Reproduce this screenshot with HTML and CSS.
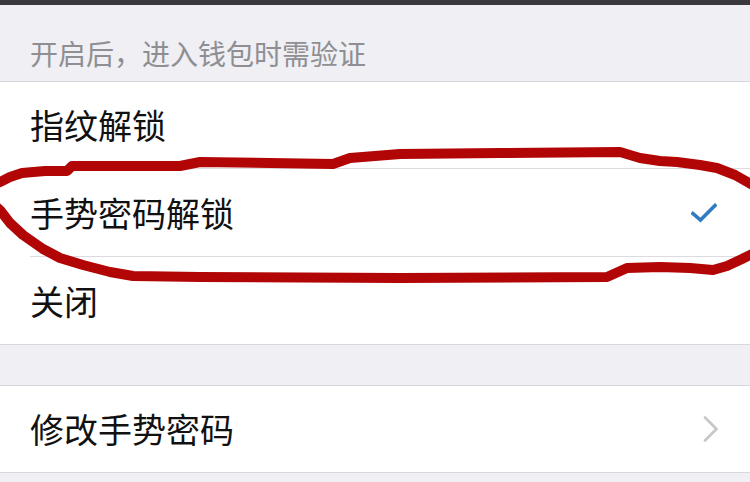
FILE: index.html
```html
<!DOCTYPE html>
<html lang="zh-CN">
<head>
    <meta charset="UTF-8">
    <meta name="viewport" content="width=device-width, initial-scale=1.0">
    <title>手势密码</title>
    <link rel="stylesheet" href="styles.css">
</head>
<body>
    <div class="topbar"></div>

    <div class="section-header">开启后，进入钱包时需验证</div>

    <div class="group">
        <div class="cell">
            <div class="cell-body">
                <span class="cell-title">指纹解锁</span>
            </div>
        </div>
        <div class="cell cell-tall">
            <div class="cell-body">
                <span class="cell-title">手势密码解锁</span>
                <svg class="check" width="26" height="20" viewBox="0 0 26 20">
                    <path d="M2 10.5 L9.5 17 L24 2.5" fill="none" stroke="#2f7cc3" stroke-width="3.6" stroke-linecap="square" stroke-linejoin="miter"/>
                </svg>
            </div>
        </div>
        <div class="cell">
            <div class="cell-body">
                <span class="cell-title">关闭</span>
            </div>
        </div>
    </div>

    <div class="group group-spaced">
        <div class="cell">
            <div class="cell-body cell-short">
                <span class="cell-title">修改手势密码</span>
                <svg class="chevron" width="16" height="26" viewBox="0 0 16 26">
                    <path d="M2 1.5 L13.5 13 L2 24.5" fill="none" stroke="#c7c7cc" stroke-width="2.6" stroke-linecap="round" stroke-linejoin="round"/>
                </svg>
            </div>
        </div>
    </div>

    <!-- 手绘的红圈标注 -->
    <svg class="annotation" width="750" height="482" viewBox="0 0 750 482">
        <g fill="none" stroke="#b20606" stroke-width="10" stroke-linecap="round" stroke-linejoin="round">
            <path d="M-14 188 L0 182 L10 177 L22 173 L45 171 L67 171 L72 166 L120 166 L180 166 L200 162 L270 163 L333 164 L350 158 L400 154 L500 153 L620 152 L640 158 L660 161 L677 162 L700 165 L717 168 L735 175 L758 188"/>
            <path d="M-12 200 L0 210 L10 223 L23 235 L43 249 L60 258 L83 265 L110 272 L133 276 L200 277 L400 278 L607 277 L627 268 L660 267 L690 268 L713 270 L727 266 L742 259 L758 251"/>
        </g>
    </svg>
</body>
</html>
```

FILE: styles.css
```css
body {
    margin: 0;
    position: relative;
    width: 750px;
    height: 482px;
    overflow: hidden;
    background-color: #efeff4;
    font-family: "Noto Sans CJK SC", "Noto Sans", sans-serif;
    color: #111111;
}
.topbar {
    height: 5px;
    background-color: #3b393d;
}
.section-header {
    box-sizing: border-box;
    height: 76px;
    padding: 34px 0 0 30px;
    font-size: 28px;
    line-height: 28px;
    color: #8e8e93;
}
.group {
    background-color: #ffffff;
    border-top: 1px solid #d8d8dc;
    border-bottom: 1px solid #d8d8dc;
}
.group-spaced {
    margin-top: 40px;
}
.cell {
    padding-left: 30px;
}
.cell-body {
    box-sizing: border-box;
    height: 87px;
    padding-right: 32px;
    display: flex;
    align-items: center;
    justify-content: space-between;
    border-bottom: 1px solid #dcdce0;
}
.cell-tall .cell-body {
    height: 88px;
}
.cell:last-child .cell-body {
    border-bottom: none;
}
.cell-body.cell-short {
    height: 86px;
}
.cell-title {
    font-size: 34px;
    line-height: 40px;
}
.check {
    margin-right: 1px;
}
.chevron {
    margin-right: -1px;
}
.annotation {
    position: absolute;
    top: 0;
    left: 0;
    pointer-events: none;
}
```
